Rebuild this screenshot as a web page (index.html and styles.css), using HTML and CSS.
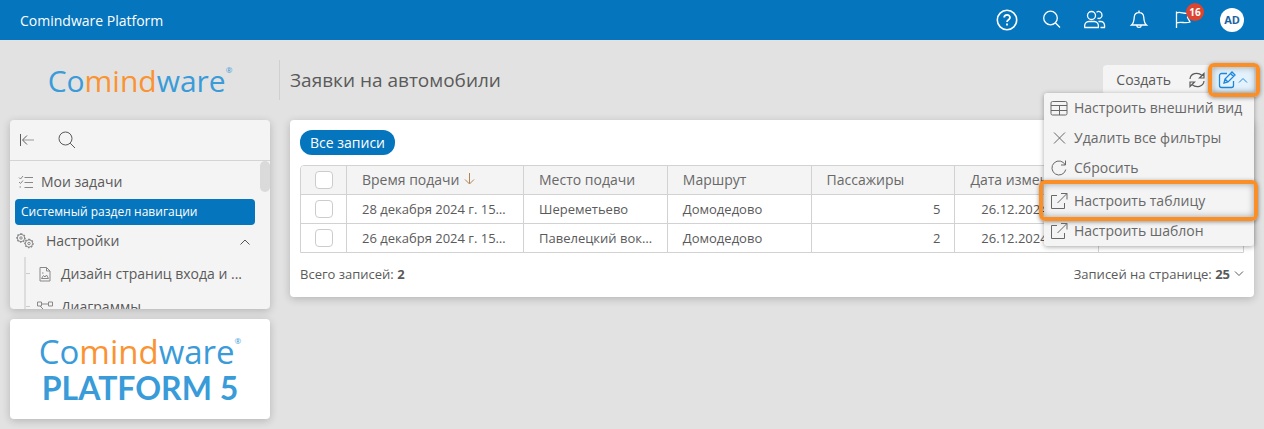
FILE: index.html
```html
<!DOCTYPE html>
<html lang="ru">
<head>
<meta charset="utf-8">
<title>Comindware Platform</title>
<link rel="stylesheet" href="styles.css">
</head>
<body>
<header class="topbar">
  <span class="brand">Comindware Platform</span>
  <nav class="top-actions" aria-label="Панель">
    <button class="top-btn" aria-label="Справка"><svg width="22" height="22" viewBox="0 0 22 22"><circle cx="11" cy="11" r="9.7" stroke-width="1.6"/><path stroke-width="1.8" d="M8.2 8.6c0-3.6 5.8-3.6 5.8 0 0 2.2-3 2-3 4.4M11 14.6v1.8"/></svg></button>
    <button class="top-btn" aria-label="Поиск"><svg width="22" height="22" viewBox="0 0 22 22"><circle cx="10.500" cy="9" r="6.800"/><path d="M15.300 13.800 20 18.500"/></svg></button>
    <button class="top-btn" aria-label="Пользователи"><svg width="22" height="22" viewBox="0 0 22 22"><circle cx="7.500" cy="6.500" r="4"/><path d="M.8 18.500c-.8-4.500 2-6 4-6h5.500c2 0 4.800 1.500 4 6zM12.500 3.200c3-2 5.500.3 5.500 3s-2.500 4-4.500 2.800M14.500 12.500H17c2.500 0 4 2.500 3.500 6h-4"/></svg></button>
    <button class="top-btn" aria-label="Уведомления"><svg width="22" height="22" viewBox="0 0 22 22"><path d="M3.500 16c2.500-2 2.500-4.500 2.700-7.500.2-3 2.300-4.800 4.800-4.800s4.600 1.800 4.800 4.800c.2 3 .2 5.500 2.700 7.500zM11 3.500v-2M8.700 16.500c.3 2.600 4.300 2.600 4.600 0"/></svg></button>
    <button class="top-btn flag" aria-label="Задачи"><svg width="22" height="22" viewBox="0 0 22 22"><path d="M4.500 2.500V19M4.500 4c4-2 7 1.500 13 0l-2 4.500 2.500 4.500c-5 2-9-1-13.500 1"/></svg><span class="badge">16</span></button>
    <button class="avatar" aria-label="Профиль">AD</button>
  </nav>
</header>
<div class="layout">
  <aside class="side">
    <div class="logo">Co<span class="accent">mind</span>ware<sup class="reg">®</sup></div>
    <section class="panel nav-panel">
      <div class="nav-head">
        <button class="icon-btn" aria-label="Свернуть"><svg width="16" height="16" viewBox="0 0 16 16"><path d="M1.500 2v12"/><path class="soft" d="M15 8H4"/><path d="M8 3.500 3.500 8 8 12.500"/></svg></button>
        <button class="icon-btn" aria-label="Поиск"><svg width="18" height="18" viewBox="0 0 18 18"><circle cx="7.500" cy="7.500" r="6.500"/><path d="M12.200 12.200l4.800 4.800"/></svg></button>
      </div>
      <div class="nav-body">
        <a class="nav-item first" href="#"><svg width="16" height="16" viewBox="0 0 16 16"><path d="M1 3.500 2.500 5 5 2M1 8l1.500 1.500L5 6.500M1.500 13h1.500M6.500 3.500H15M6.500 8.500H15M6.500 13.500H15"/></svg>Мои задачи</a>
        <a class="nav-item current" href="#">Системный раздел навигации</a>
        <a class="nav-item group" href="#"><svg width="18" height="16" viewBox="0 0 18 16"><circle cx="5" cy="5" r="3.700"/><circle cx="5" cy="5" r="1.200"/><circle cx="13" cy="10.500" r="3.700"/><circle cx="13" cy="10.500" r="1.200"/><path stroke-width="1.200" stroke-dasharray="1.500 1.600" d="M5 .8a4.200 4.200 0 1 1 0 8.400 4.200 4.200 0 0 1 0-8.400M13 6.300a4.200 4.200 0 1 1 0 8.400 4.200 4.200 0 0 1 0-8.400"/></svg>Настройки<svg class="chevron" width="12" height="8" viewBox="0 0 12 8"><path d="M1.500 7.500 6 3l4.500 4.500"/></svg></a>
        <div class="tree">
          <a class="nav-item" href="#"><svg width="16" height="16" viewBox="0 0 16 16"><path d="M3 1.500h6.500L13 5v10H3zM9.500 1.500V5H13M4.500 12.500l2-3 1.500 1.500 1.500-2 2 3.500zM5 7h1.500"/></svg>Дизайн страниц входа и ...</a>
          <a class="nav-item" href="#"><svg width="16" height="16" viewBox="0 0 16 16"><path d="M.5 3h4v4h-4zM11.500 3h4v4h-4zM4.500 5h7M3 7l4 4M6.500 10.500h4v4h-4z"/></svg>Диаграммы</a>
        </div>
        <span class="scroll-thumb"></span>
      </div>
    </section>
    <section class="panel product">
      <div class="logo product-logo">Co<span class="accent">mind</span>ware<sup class="reg">®</sup></div>
      <div class="product-name">PLATFORM 5</div>
    </section>
  </aside>
  <main class="main">
    <div class="page-head">
      <h1 class="title">Заявки на автомобили</h1>
      <div class="toolbar">
        <button class="create">Создать</button>
        <button class="icon-btn" aria-label="Обновить"><svg width="18" height="18" viewBox="0 0 18 18"><path stroke-width="1.200" d="M2 8C2.500 2.500 9.500.5 14 4.500M16 2.500V7h-4.500zM16 10C15.500 15.500 8.500 17.500 4 13.500M2 15.500V11h4.500z"/></svg></button>
        <button class="edit" aria-label="Изменить" aria-expanded="true"><svg width="18" height="18" viewBox="0 0 18 18"><path stroke-width="1.300" d="M9 2.500H3.500a2 2 0 0 0-2 2v10a2 2 0 0 0 2 2h10a2 2 0 0 0 2-2V10M6 12l1-4 7-7 3 3-7 7zM12.500 2.500l3 3M7 8l3 3"/></svg><svg width="10" height="6" viewBox="0 0 10 6"><path d="M1 5.500l4-4 4 4"/></svg><span class="callout"></span></button>
        <div class="menu" role="menu">
          <button class="menu-item" role="menuitem"><svg width="18" height="18" viewBox="0 0 18 18"><path d="M2.500 2.500h13A1.500 1.500 0 0 1 17 4v10.500a1.500 1.500 0 0 1-1.500 1.500h-13A1.500 1.500 0 0 1 1 14.500V4a1.500 1.500 0 0 1 1.500-1.500zM1 6.500h16M1 11.500h16M9.500 6.500V16"/></svg>Настроить внешний вид</button>
          <button class="menu-item" role="menuitem"><svg width="18" height="18" viewBox="0 0 18 18"><path d="M4 3.500l11 11M15 3.500l-11 11"/></svg>Удалить все фильтры</button>
          <button class="menu-item" role="menuitem"><svg width="18" height="18" viewBox="0 0 18 18"><path d="M15.500 1.500V6H11M15.300 6a7 7 0 1 0 .5 4.500"/></svg>Сбросить</button>
          <button class="menu-item marked" role="menuitem"><svg width="18" height="18" viewBox="0 0 18 18"><path d="M7 3.500H1.500v13h13V11M11 1.500h6v6M17 1.500l-9.500 9.500"/></svg>Настроить таблицу<span class="callout"></span></button>
          <button class="menu-item" role="menuitem"><svg width="18" height="18" viewBox="0 0 18 18"><path d="M7 3.500H1.500v13h13V11M11 1.500h6v6M17 1.500l-9.500 9.500"/></svg>Настроить шаблон</button>
        </div>
      </div>
    </div>
    <section class="panel records">
      <button class="pill">Все записи</button>
      <div class="table-wrap">
      <table class="grid">
        <colgroup><col class="c-check"><col class="c-time"><col><col><col><col><col></colgroup>
        <thead><tr>
          <th class="check"><input type="checkbox" aria-label="Выбрать все"></th>
          <th>Время подачи<svg class="sort" width="12" height="12" viewBox="0 0 12 12"><path d="M6.500 0v10.500M2 6.500 6.500 11 11 6.500"/></svg></th>
          <th>Место подачи</th><th>Маршрут</th><th>Пассажиры</th><th>Дата изменения</th><th></th>
        </tr></thead>
        <tbody>
          <tr><td class="check"><input type="checkbox" aria-label="Выбрать запись 1"></td><td>28 декабря 2024 г. 15:00</td><td>Шереметьево</td><td>Домодедово</td><td class="num">5</td><td class="num">26.12.2024 15:02</td><td></td></tr>
          <tr><td class="check"><input type="checkbox" aria-label="Выбрать запись 2"></td><td>26 декабря 2024 г. 15:00</td><td>Павелецкий вокзал</td><td>Домодедово</td><td class="num">2</td><td class="num">26.12.2024 15:02</td><td></td></tr>
        </tbody>
      </table>
      </div>
      <div class="summary">
        <span>Всего записей: <b>2</b></span>
        <button class="page-size">Записей на странице: <b>25</b><svg width="10" height="6" viewBox="0 0 10 6"><path d="M1 .5l4 4 4-4"/></svg></button>
      </div>
    </section>
  </main>
</div>
</body>
</html>
```

FILE: styles.css
```css
* { box-sizing: border-box; }
body {
  margin: 0;
  min-height: 100vh;
  background: #e2e2e2;
  color: #5a5a5a;
  font-family: "Open Sans", "Noto Sans", sans-serif;
  font-size: 14px;
  line-height: 20px;
}
button {
  border: 0;
  padding: 0;
  background: none;
  color: inherit;
  font: inherit;
  cursor: pointer;
}
a { color: inherit; text-decoration: none; }
svg { display: block; flex: none; fill: none; stroke: currentColor; stroke-width: 1; }

.topbar {
  display: flex;
  align-items: center;
  justify-content: space-between;
  height: 40px;
  padding: 0 20px;
  background: #0575bd;
  color: #fff;
}
.brand { padding-top: 1px; }
.top-actions { display: flex; align-items: center; gap: 22px; }
.top-btn { position: relative; }
.top-btn svg { stroke-width: 1.3; }
.badge {
  position: absolute;
  top: -6px;
  right: -10px;
  width: 18px;
  height: 18px;
  border-radius: 50%;
  background: #dd4530;
  font-size: 10px;
  font-weight: 700;
  line-height: 18px;
}
.avatar {
  width: 24px;
  height: 24px;
  margin-left: 4px;
  border-radius: 50%;
  background: #fff;
  color: #1b64a0;
  font-size: 11px;
  font-weight: 700;
}

.layout { display: flex; gap: 20px; padding: 0 10px 10px; }
.side { flex: none; width: 260px; }
.main { flex: 1; min-width: 0; }
.panel { border-radius: 4px; background: #fff; box-shadow: 0 2px 8px rgba(0, 0, 0, .2); }

.logo {
  display: flex;
  align-items: center;
  justify-content: center;
  height: 80px;
  padding-top: 2px;
  color: #3a9bd9;
  font-size: 30px;
  line-height: 40px;
}
.accent { color: #fa9332; }
.reg { align-self: flex-start; margin-top: 22px; font-size: 8px; line-height: 12px; }

.nav-panel { height: 189px; overflow: hidden; background: #f4f4f4; }
.nav-head {
  display: flex;
  align-items: center;
  gap: 23px;
  height: 41px;
  padding: 0 9px;
  border-bottom: 1px solid #d4d4d4;
}
.soft { stroke: #999; }
.nav-body { position: relative; padding-top: 6px; }
.nav-item { display: flex; align-items: center; gap: 7px; height: 32px; padding-left: 8px; }
.nav-item.first { padding-bottom: 2px; }
.nav-item svg { color: #888; }
.nav-item.current {
  height: 26px;
  margin: 0 15px 0 5px;
  padding-left: 6px;
  border-radius: 4px;
  background: #0575bd;
  color: #fff;
  font-size: 12px;
}
.nav-item.group { gap: 12px; padding: 0 19px 0 6px; }
.nav-item .chevron { margin-left: auto; color: #555; }
.tree { margin-left: 14px; border-left: 2px solid #ddd; }
.tree .nav-item { gap: 8px; height: 33px; padding-left: 0; }
.tree .nav-item::before { content: ""; width: 4px; margin-right: -1px; border-top: 1px solid #ccc; }
.scroll-thumb {
  position: absolute;
  top: 0;
  right: 0;
  width: 10px;
  height: 31px;
  border-radius: 5px;
  background: #dadada;
}

.product { height: 100px; margin-top: 10px; padding-top: 10px; }
.product-logo { height: 46px; padding-top: 0; font-size: 33px; }
.product-logo .reg { margin-top: 6px; }
.product-name {
  color: #3a9bd9;
  font-family: Lato, sans-serif;
  font-size: 32px;
  font-weight: 700;
  line-height: 26px;
  text-align: center;
}

.page-head { display: flex; justify-content: space-between; align-items: center; height: 80px; }
.title {
  margin: 0 0 0 -11px;
  padding-left: 10px;
  border-left: 1px solid #d0d0d0;
  font-size: 19px;
  font-weight: 400;
  line-height: 40px;
}
.toolbar {
  position: relative;
  display: flex;
  align-items: center;
  height: 30px;
  border-radius: 4px;
  background: #f4f4f4;
}
.create { padding: 0 17px 0 13px; }
.edit {
  position: relative;
  display: flex;
  align-items: center;
  gap: 2px;
  height: 28px;
  margin-left: 8px;
  padding: 0 6px 0 4px;
  background: #e3f2fc;
  color: #1d87dd;
}
.callout {
  position: absolute;
  border: 4px solid #fb8f27;
  border-radius: 6px;
  box-shadow: 0 1px 4px rgba(0, 0, 0, .4), inset 0 0 7px rgba(0, 0, 0, .35);
  pointer-events: none;
}
.edit .callout { inset: -3px -6px -3px -6px; z-index: 3; }
.menu {
  position: absolute;
  z-index: 2;
  top: 28px;
  right: 0;
  width: 210px;
  border-radius: 3px;
  background: #f4f4f4;
  box-shadow: 0 1px 5px rgba(0, 0, 0, .35);
  color: #686868;
}
.menu-item {
  position: relative;
  display: flex;
  align-items: center;
  gap: 6px;
  width: 100%;
  height: 30px;
  padding-left: 6px;
  white-space: nowrap;
}
.menu-item.marked { margin-top: 3px; }
.marked .callout { inset: -6px -4px -5px -5px; }

.records { padding: 10px 10px 13px; }
.pill {
  display: block;
  height: 25px;
  padding: 0 10px;
  border-radius: 12px;
  background: #0575bd;
  color: #fff;
}
.table-wrap { margin-top: 10px; border: 1px solid #d2d2d2; border-radius: 4px 4px 0 0; overflow: hidden; }
.grid { width: 100%; border-collapse: separate; border-spacing: 0; table-layout: fixed; font-size: 13px; }
.c-check { width: 46px; }
.c-time { width: 177px; }
.grid th, .grid td {
  height: 29px;
  padding: 0 14px 0 15px;
  border-right: 1px solid #d2d2d2;
  border-bottom: 1px solid #d2d2d2;
  overflow: hidden;
  text-overflow: ellipsis;
  white-space: nowrap;
  text-align: left;
  font-weight: 400;
}
.grid th { background: #f4f4f4; color: #686868; font-size: 14px; }
.grid tr > :last-child { border-right: 0; }
.grid tbody tr:last-child td { height: 28px; border-bottom: 0; }
.grid td:nth-child(3) { padding-right: 10px; }
.grid .num { text-align: right; }
.grid .check { padding: 0; text-align: center; }
.check input {
  appearance: none;
  display: block;
  width: 18px;
  height: 18px;
  margin: 0 auto;
  border: 1px solid #ccc;
  border-radius: 4px;
  background: #fff;
}
.sort { display: inline-block; margin-left: 4px; color: #b08355; }
.summary { display: flex; align-items: center; justify-content: space-between; margin-top: 11px; font-size: 13px; }
.page-size { display: flex; align-items: center; gap: 4px; white-space: pre; }
.page-size b { margin-left: -4px; }
```
